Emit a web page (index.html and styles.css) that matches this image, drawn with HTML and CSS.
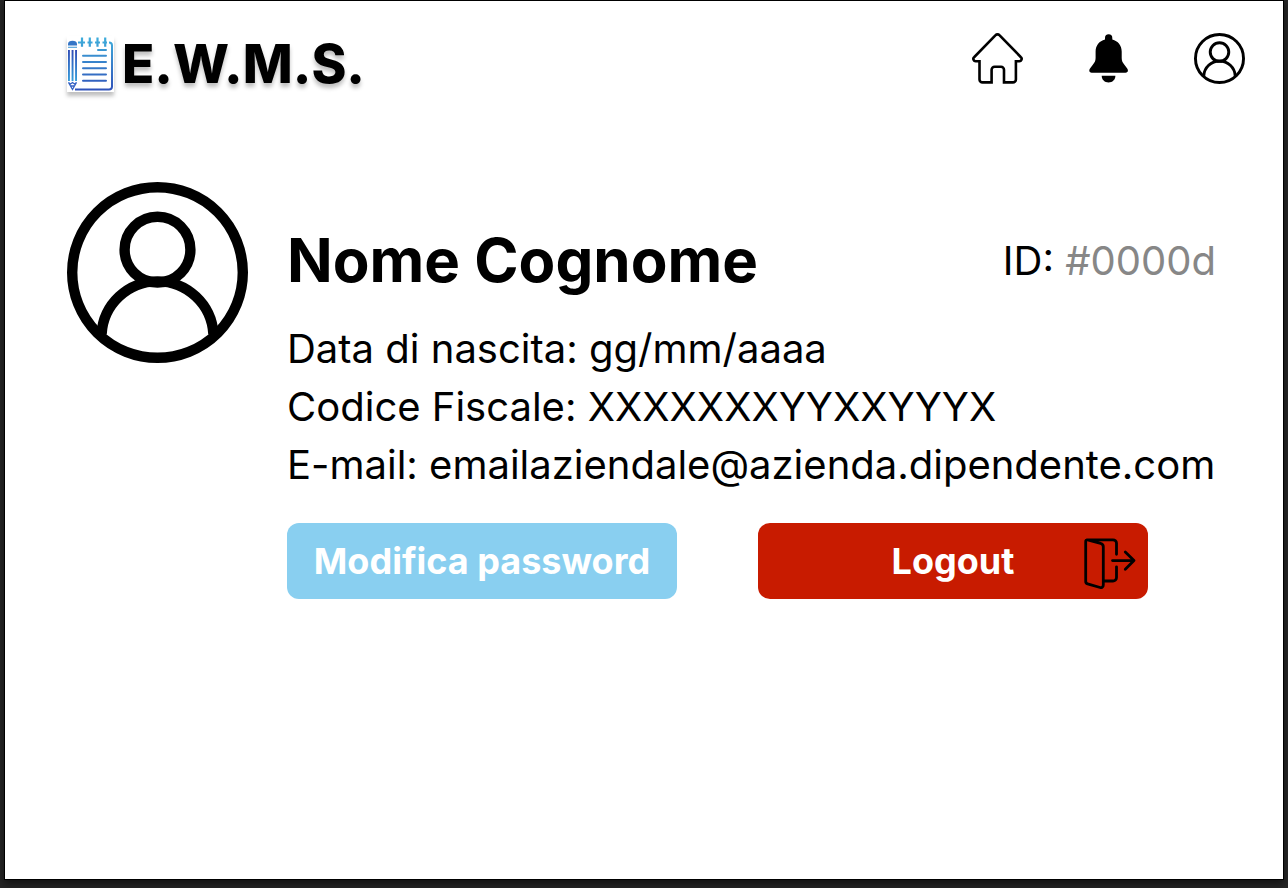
FILE: index.html
```html
<!DOCTYPE html>
<html lang="it">
<head>
<meta charset="utf-8">
<meta name="viewport" content="width=device-width, initial-scale=1">
<title>E.W.M.S. - Profilo</title>
<link rel="stylesheet" href="styles.css">
</head>
<body>
<svg class="defs" aria-hidden="true">
  <symbol id="user" viewBox="0 0 181 181">
    <g fill="none" stroke="#000" stroke-width="10.4">
      <circle cx="90.5" cy="90.5" r="85.3"/>
      <circle cx="90.5" cy="67.7" r="32.9"/>
      <path d="M34.6 152A56 56 0 0 1 146.4 152"/>
    </g>
  </symbol>
</svg>
<div class="page">
  <header class="header">
    <a class="brand" href="#">
      <svg class="brand-icon" viewBox="0 0 47 56" aria-hidden="true">
        <defs>
          <linearGradient id="ink" gradientUnits="userSpaceOnUse" x1="0" y1="0" x2="0" y2="56">
            <stop offset="0" stop-color="#3fb0dc"/>
            <stop offset="1" stop-color="#2f4fb8"/>
          </linearGradient>
          <linearGradient id="lead" gradientUnits="userSpaceOnUse" x1="0" y1="12" x2="0" y2="46">
            <stop offset="0" stop-color="#3048b4"/>
            <stop offset="1" stop-color="#36a0dc"/>
          </linearGradient>
        </defs>
        <g fill="none" stroke="url(#ink)" stroke-width="2">
          <path d="M11 6.500H18M20.500 6.500H25.500M28 6.500H33M35.500 6.500H40M42 6.500c2 0 3 1 3 3v41c0 2-1 3-3 3H8"/>
          <path d="M15 1.500v9.200M22.800 1.500v9.200M30.500 1.500v9.200M38.200 1.500v9.200" stroke-width="2.200"/>
          <path d="M16 19.700h23M16 26h23M16 32.200h23M16 38.500h23M16 44.800h23M31 14h8" stroke-linecap="round"/>
        </g>
        <path d="M1 9.600V8c0-2 2-3.200 4.500-3.200S10 6 10 8v1.600z" fill="#3475c6"/>
        <path d="M1 11.300h9" stroke="#58a6dc" stroke-width="1.200"/>
        <path d="M1 14h1.900v31H1zM4.600 14h1.900v31H4.600zM8.100 14H10v31H8.100z" fill="url(#lead)"/>
        <path d="M1.500 46.500l4 7 4-7-2 1.500-2-1.500-2 1.500zM4 50h3" fill="none" stroke="#3562c4" stroke-width="1.300"/>
      </svg>
      <span>E.W.M.S.</span>
    </a>
    <nav class="nav" aria-label="Principale">
      <a href="#" aria-label="Home">
        <svg class="icon" viewBox="0 0 51 51"><path d="M19.6 49.4H10.5a3 3 0 0 1-3-3V28.2H3.8A2.3 2.3 0 0 1 2.1 24.2L23.6 2.2a2.6 2.6 0 0 1 3.8 0L48.9 24.2A2.3 2.3 0 0 1 47.2 28.2H43.9V46.4a3 3 0 0 1-3 3H32V36.8a3 3 0 0 0-3-3H22.6a3 3 0 0 0-3 3Z" fill="none" stroke="#000" stroke-width="2.6"/></svg>
      </a>
      <a href="#" aria-label="Notifiche">
        <svg class="icon-bell" viewBox="0 0 39 51"><path d="M16 6.500V5a3.600 3.600 0 0 1 7.300 0V6.500C29 8 32.700 12.500 32.700 18.500V25c0 3 1 4.500 2.500 6.500l3 4c1.500 2 .5 4.200-1.700 4.200H2.700C.5 39.700-.5 37.500 1 35.500l3-4c1.500-2 2.600-3.500 2.600-6.500V18.500C6.600 12.500 10.300 8 16 6.500zM12.700 42.800h13.700c0 4-3 6.700-6.800 6.700s-6.900-2.700-6.900-6.700z"/></svg>
      </a>
      <a href="#" aria-label="Profilo">
        <svg class="icon"><use href="#user"/></svg>
      </a>
    </nav>
  </header>
  <main class="profile">
    <svg class="avatar" role="img" aria-label="Foto profilo"><use href="#user"/></svg>
    <section class="details">
      <div class="heading">
        <h1>Nome Cognome</h1>
        <p>ID: <span class="id">#0000d</span></p>
      </div>
      <div class="info">
        <p>Data di nascita: gg/mm/aaaa</p>
        <p>Codice Fiscale: XXXXXXXYYXXYYYX</p>
        <p>E-mail: emailaziendale@azienda.dipendente.com</p>
      </div>
      <div class="actions">
        <button class="button edit" type="button">Modifica password</button>
        <button class="button logout" type="button">Logout
          <svg class="exit" viewBox="0 0 52 52" aria-hidden="true"><path d="M3 1.800H29a3.500 3.500 0 0 1 3.500 3.500V16.300M32.500 28.800V39.500a3.500 3.500 0 0 1-3.500 3.500H20M3.600 1.800L16.600 5.300a3.500 3.500 0 0 1 2.700 3.400V47a2.500 2.500 0 0 1-3.200 2.500L3.600 45.800A2.600 2.600 0 0 1 1.700 43.200V3.800A1.700 1.700 0 0 1 3.600 1.800ZM28.500 22.600H50M41.300 14l8.700 8.600-8.700 8.600" fill="none" stroke="#000" stroke-width="2.800" stroke-linecap="round" stroke-linejoin="round"/></svg>
        </button>
      </div>
    </section>
  </main>
</div>
</body>
</html>
```
FILE: styles.css
```css
* {
  box-sizing: border-box;
}

body {
  margin: 0;
  min-height: 100vh;
  display: flex;
  padding: 0 4px 8px;
  background: #262626;
  font-family: Inter, "Liberation Sans", sans-serif;
  color: #000;
}

h1,
p {
  margin: 0;
}

svg {
  display: block;
}

.defs {
  position: absolute;
  width: 0;
  height: 0;
}

.page {
  flex: 1;
  min-width: 0;
  background: #fff;
  border: 1px solid #000;
  box-shadow: 0 4px 8px rgba(0, 0, 0, 0.5);
}

.header {
  display: flex;
  justify-content: space-between;
  align-items: flex-start;
  padding: 32px 38px 0 62px;
}

.brand {
  display: flex;
  align-items: center;
  gap: 8px;
  color: inherit;
  text-decoration: none;
  font-size: 53px;
  line-height: 62px;
  font-weight: 800;
  text-shadow: 0 4px 4px rgba(0, 0, 0, 0.25);
}

.brand-icon {
  width: 47px;
  height: 56px;
  background: #fff;
  box-shadow: 0 4px 4px rgba(0, 0, 0, 0.25);
}

.nav {
  display: flex;
  gap: 66px;
}

.icon {
  width: 51px;
  height: 51px;
}

.icon-bell {
  width: 39px;
  height: 51px;
}

.profile {
  display: flex;
  align-items: flex-start;
  gap: 39px;
  padding: 87px 67px 0 62px;
}

.avatar {
  flex: none;
  width: 181px;
  height: 181px;
}

.details {
  flex: 1;
  min-width: 0;
  padding-top: 38px;
}

.heading {
  display: flex;
  justify-content: space-between;
  align-items: center;
  font-size: 40px;
}

h1 {
  font-size: 60px;
  line-height: 80px;
  font-weight: 700;
}

.id {
  color: #878787;
}

.info {
  padding-top: 20px;
  font-size: 40px;
  line-height: 58px;
  white-space: nowrap;
}

.actions {
  display: flex;
  gap: 81px;
  padding-top: 29px;
}

.button {
  position: relative;
  width: 390px;
  height: 76px;
  border: 0;
  border-radius: 12px;
  color: #fff;
  font: 700 36px Inter, "Liberation Sans", sans-serif;
}

.edit {
  background: #89cff0;
}

.logout {
  background: #c81b00;
}

.exit {
  position: absolute;
  top: 15px;
  right: 12px;
  width: 52px;
  height: 52px;
}
```
